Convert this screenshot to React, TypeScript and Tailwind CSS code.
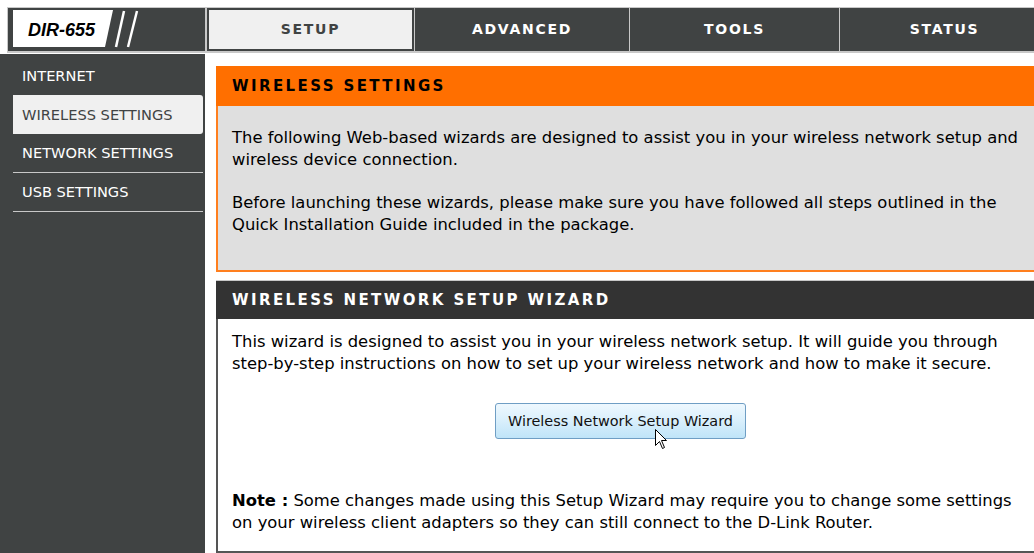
import React from "react";

const tabs = [
  { label: "SETUP", width: "w-[208px]", active: true },
  { label: "ADVANCED", width: "w-[215px]", active: false },
  { label: "TOOLS", width: "w-[210px]", active: false },
  { label: "STATUS", width: "w-[210px]", active: false },
];

const menu = [
  { label: "INTERNET", active: false, line: false },
  { label: "WIRELESS SETTINGS", active: true, line: false },
  { label: "NETWORK SETTINGS", active: false, line: true },
  { label: "USB SETTINGS", active: false, line: true },
];

function Logo() {
  return (
    <div className="relative w-[140px] h-[43px]">
      <svg width="140" height="43" viewBox="0 0 140 43" className="absolute left-0 top-0">
        <polygon points="0,2 100,2 92,39 0,39" fill="#ffffff" />
        <line x1="103" y1="39" x2="111" y2="3" stroke="#ffffff" strokeWidth="2.5" />
        <line x1="115" y1="39" x2="124" y2="3" stroke="#ffffff" strokeWidth="2.5" />
      </svg>
      <span className="absolute left-[15px] top-[11px] font-['Liberation_Sans',sans-serif] text-[18px] leading-[22px] font-bold italic text-black">
        DIR-655
      </span>
    </div>
  );
}

function Cursor() {
  return (
    <svg width="13" height="21" viewBox="0 0 13 21" className="absolute left-[160px] top-[26px]">
      <path
        d="M0.5 0.5 L0.5 16.5 L4.5 12.5 L7.5 19.5 L9.5 18.5 L6.5 11.5 L11.5 11.5 Z"
        fill="#ffffff"
        stroke="#000000"
        strokeWidth="1"
        strokeLinejoin="round"
      />
    </svg>
  );
}

export default function App() {
  return (
    <div className="w-[1034px] h-[553px] overflow-hidden bg-white font-['DejaVu_Sans',sans-serif]">
      {/* top navigation */}
      <div className="ml-[7px] mt-[7px] flex h-[46px] w-[1100px] bg-[#404343] border-t border-l border-b-2 border-[#c8c8c8]">
        <div className="w-[199px] pl-[5px] border-r-2 border-[#c8c8c8]">
          <Logo />
        </div>
        {tabs.map((tab) => (
          <div key={tab.label} className={`${tab.width} h-full border-r border-[#c8c8c8] p-[2px]`}>
            <div
              className={`h-full flex items-center justify-center text-[14px] font-bold tracking-[1.7px] ${
                tab.active ? "bg-[#f0f0f0] text-[#404343]" : "text-white"
              }`}
            >
              {tab.label}
            </div>
          </div>
        ))}
      </div>

      <div className="flex mt-[1px] h-[500px]">
        {/* left menu */}
        <div className="w-[205px] shrink-0 bg-[#404343] pt-[2px]">
          {menu.map((item) => (
            <div
              key={item.label}
              className={`ml-[13px] w-[190px] h-[39px] flex items-center pl-[9px] text-[14.6px] ${
                item.active ? "bg-[#f0f0f0] text-[#404343] rounded-r-[3px]" : "text-white"
              } ${item.line ? "border-b border-[#c8c8c8]" : ""}`}
            >
              {item.label}
            </div>
          ))}
        </div>

        {/* page content */}
        <div className="ml-[11px] pt-[12px] w-[830px] shrink-0 text-[16.4px] leading-[22px] text-black">
          <div>
            <div className="h-[40px] bg-[#ff6f00] flex items-center pl-[16px] text-[15px] font-bold tracking-[2.4px]">
              WIRELESS SETTINGS
            </div>
            <div className="bg-[#dfdfdf] border-l-2 border-b-2 border-[#ff7f1e] pl-[14px] pt-[21px] pb-[34px] whitespace-nowrap">
              <p>
                The following Web-based wizards are designed to assist you in your wireless network setup and
                <br />
                wireless device connection.
              </p>
              <p className="mt-[21px]">
                Before launching these wizards, please make sure you have followed all steps outlined in the
                <br />
                Quick Installation Guide included in the package.
              </p>
            </div>
          </div>

          <div className="mt-[8px]">
            <div className="h-[39px] bg-[#333333] border-t border-[#c8c8c8] flex items-center pl-[16px] text-[15px] font-bold tracking-[2.4px] text-white">
              WIRELESS NETWORK SETUP WIZARD
            </div>
            <div className="bg-white border-l-2 border-b-2 border-[#555555] pl-[14px] pr-[37px] pt-[12px] pb-[17px] whitespace-nowrap">
              <p>
                This wizard is designed to assist you in your wireless network setup. It will guide you through
                <br />
                step-by-step instructions on how to set up your wireless network and how to make it secure.
              </p>
              <div className="mt-[28px] flex justify-center">
                <div className="relative">
                  <button className="w-[251px] h-[36px] rounded-[3px] border border-[#6f9ec4] bg-gradient-to-b from-[#eef8fe] via-[#d9effc] to-[#bfe4f8] text-[14.4px] text-[#111] leading-none">
                    Wireless Network Setup Wizard
                  </button>
                  <Cursor />
                </div>
              </div>
              <p className="mt-[51px]">
                <span className="font-bold">Note :</span> Some changes made using this Setup Wizard may require you
                to change some settings
                <br />
                on your wireless client adapters so they can still connect to the D-Link Router.
              </p>
            </div>
          </div>
        </div>
      </div>
    </div>
  );
}
